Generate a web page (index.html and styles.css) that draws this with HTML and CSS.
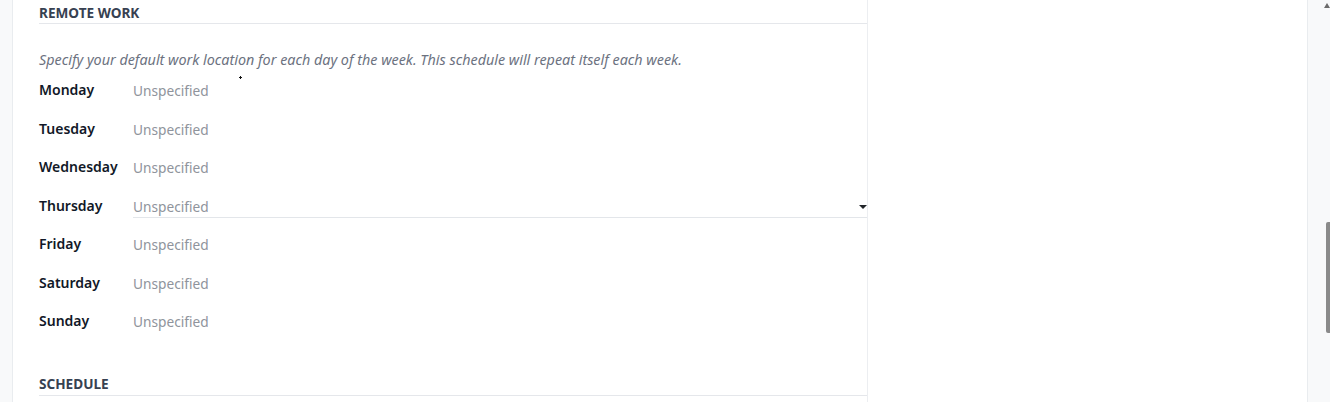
FILE: index.html
```html
<!DOCTYPE html>
<html>
<head>
<meta charset="utf-8">
<link rel="stylesheet" href="styles.css">
</head>
<body>
<div class="gutter"></div>
<div class="sheet">
  <div class="main">
    <div class="group">
      <div class="group-title">Remote Work</div>
      <p class="hint">Specify your default work location for each day of the week. This schedule will repeat itself each week.</p>
      <div class="days">
        <div class="row"><span class="label">Monday</span><span class="field">Unspecified</span></div>
        <div class="row"><span class="label">Tuesday</span><span class="field">Unspecified</span></div>
        <div class="row"><span class="label">Wednesday</span><span class="field">Unspecified</span></div>
        <div class="row"><span class="label">Thursday</span><span class="field active">Unspecified<i class="caret"></i></span></div>
        <div class="row"><span class="label">Friday</span><span class="field">Unspecified</span></div>
        <div class="row"><span class="label">Saturday</span><span class="field">Unspecified</span></div>
        <div class="row"><span class="label">Sunday</span><span class="field">Unspecified</span></div>
      </div>
    </div>
    <div class="group schedule">
      <div class="group-title">Schedule</div>
    </div>
    <span class="cursor-dot"></span>
  </div>
  <div class="side"></div>
</div>
<div class="scrollbar">
  <i class="arrow-up"></i>
  <div class="thumb"></div>
</div>
</body>
</html>
```
FILE: styles.css
```css
* { box-sizing: border-box; }
html, body { margin: 0; height: 402px; overflow: hidden; }
body {
  display: flex;
  font-family: "Noto Sans", "Open Sans", sans-serif;
  font-size: 14px;
  color: #212529;
  background: #fff;
}
.gutter {
  width: 13px;
  flex: none;
  background: #f8f9fa;
  border-right: 1px solid #e9ecef;
}
.sheet {
  flex: 1;
  display: flex;
  background: #fff;
  border-right: 1px solid #e9ecef;
}
.main {
  position: relative;
  width: 855px;
  flex: none;
  padding: 3px 0 0 26px;
  border-right: 1px solid #eceef1;
}
.side { flex: 1; }
.group-title {
  font-size: 13.6px;
  font-weight: 700;
  text-transform: uppercase;
  line-height: 20px;
  color: #374151;
  border-bottom: 1px solid #e5e7eb;
}
.hint {
  margin: 26px 0 1px;
  line-height: 20px;
  font-size: 14.35px;
  font-style: italic;
  color: #6c727f;
}
.days { display: flex; flex-direction: column; }
.row {
  display: grid;
  grid-template-columns: 94px 1fr;
  align-items: center;
  height: 38.5px;
}
.label {
  font-weight: 600;
  color: #111827;
  line-height: 20px;
}
.field {
  position: relative;
  display: flex;
  align-items: center;
  height: 25px;
  padding-top: 2px;
  font-size: 13.7px;
  color: #8f949c;
  border-bottom: 1px solid transparent;
}
.field.active { border-bottom-color: #e3e6ea; }
.caret {
  position: absolute;
  right: 0;
  top: 12px;
  width: 0;
  height: 0;
  border-left: 4px solid transparent;
  border-right: 4px solid transparent;
  border-top: 4px solid #212529;
}
.schedule { margin-top: 33px; }
.schedule .group-title { padding-bottom: 1px; }
.cursor-dot {
  position: absolute;
  left: 226px;
  top: 76px;
  width: 3px;
  height: 3px;
  background: #111;
  clip-path: polygon(33% 0, 67% 0, 67% 33%, 100% 33%, 100% 67%, 67% 67%, 67% 100%, 33% 100%, 33% 67%, 0 67%, 0 33%, 33% 33%);
}
.scrollbar {
  position: relative;
  width: 22px;
  flex: none;
  background: #f8f9fa;
}
.arrow-up {
  position: absolute;
  right: 0;
  top: 3px;
  width: 0;
  height: 0;
  border-left: 3px solid transparent;
  border-right: 3px solid transparent;
  border-bottom: 5px solid #6b6b6b;
}
.thumb {
  position: absolute;
  right: 0;
  top: 222px;
  width: 4px;
  height: 111px;
  background: #8a8a8a;
  border-radius: 2px 0 0 2px;
}
```
